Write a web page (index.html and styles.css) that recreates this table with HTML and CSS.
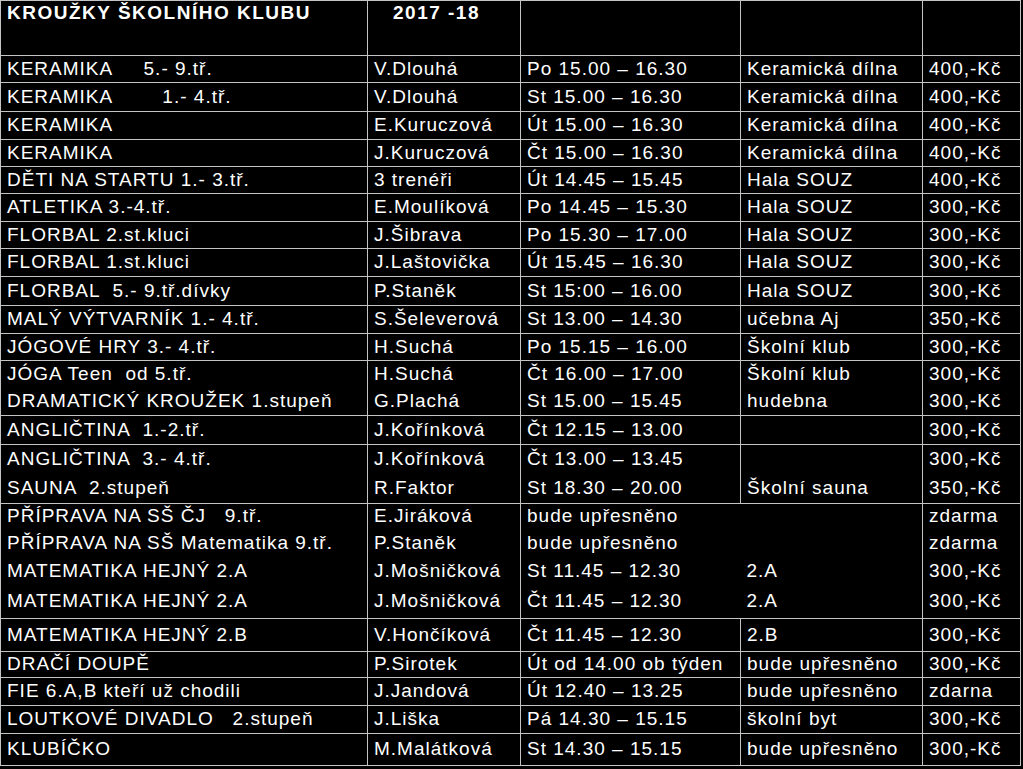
FILE: index.html
```html
<!DOCTYPE html>
<html lang="cs">
<head>
<meta charset="utf-8">
<title>Kroužky školního klubu 2017-18</title>
<link rel="stylesheet" href="styles.css">
</head>
<body>
<table class="sheet">
<colgroup>
<col class="c1"><col class="c2"><col class="c3"><col class="c4"><col class="c5">
</colgroup>
<tbody>
<tr class="head h55"><td class="title">KROUŽKY ŠKOLNÍHO KLUBU</td><td class="title year">2017 -18</td><td></td><td></td><td></td></tr>
<tr class="h27"><td>KERAMIKA     5.- 9.tř.</td><td>V.Dlouhá</td><td>Po 15.00 – 16.30</td><td>Keramická dílna</td><td>400,-Kč</td></tr>
<tr class="h29"><td>KERAMIKA        1.- 4.tř.</td><td>V.Dlouhá</td><td>St 15.00 – 16.30</td><td>Keramická dílna</td><td>400,-Kč</td></tr>
<tr class="h28"><td>KERAMIKA</td><td>E.Kuruczová</td><td>Út 15.00 – 16.30</td><td>Keramická dílna</td><td>400,-Kč</td></tr>
<tr class="h27"><td>KERAMIKA</td><td>J.Kuruczová</td><td>Čt 15.00 – 16.30</td><td>Keramická dílna</td><td>400,-Kč</td></tr>
<tr class="h27"><td>DĚTI NA STARTU 1.- 3.tř.</td><td>3 trenéři</td><td>Út 14.45 – 15.45</td><td>Hala SOUZ</td><td>400,-Kč</td></tr>
<tr class="h28"><td>ATLETIKA 3.-4.tř.</td><td>E.Moulíková</td><td>Po 14.45 – 15.30</td><td>Hala SOUZ</td><td>300,-Kč</td></tr>
<tr class="h27"><td>FLORBAL 2.st.kluci</td><td>J.Šibrava</td><td>Po 15.30 – 17.00</td><td>Hala SOUZ</td><td>300,-Kč</td></tr>
<tr class="h28"><td>FLORBAL 1.st.kluci</td><td>J.Laštovička</td><td>Út 15.45 – 16.30</td><td>Hala SOUZ</td><td>300,-Kč</td></tr>
<tr class="h29"><td>FLORBAL  5.- 9.tř.dívky</td><td>P.Staněk</td><td>St 15:00 – 16.00</td><td>Hala SOUZ</td><td>300,-Kč</td></tr>
<tr class="h28"><td>MALÝ VÝTVARNÍK 1.- 4.tř.</td><td>S.Šeleverová</td><td>St 13.00 – 14.30</td><td>učebna Aj</td><td>350,-Kč</td></tr>
<tr class="h27"><td>JÓGOVÉ HRY 3.- 4.tř.</td><td>H.Suchá</td><td>Po 15.15 – 16.00</td><td>Školní klub</td><td>300,-Kč</td></tr>
<tr class="h28"><td>JÓGA Teen  od 5.tř.</td><td>H.Suchá</td><td>Čt 16.00 – 17.00</td><td>Školní klub</td><td>300,-Kč</td></tr>
<tr class="h27 cont"><td>DRAMATICKÝ KROUŽEK 1.stupeň</td><td>G.Plachá</td><td>St 15.00 – 15.45</td><td>hudebna</td><td>300,-Kč</td></tr>
<tr class="h29"><td>ANGLIČTINA  1.-2.tř.</td><td>J.Kořínková</td><td>Čt 12.15 – 13.00</td><td></td><td>300,-Kč</td></tr>
<tr class="h30"><td>ANGLIČTINA  3.- 4.tř.</td><td>J.Kořínková</td><td>Čt 13.00 – 13.45</td><td></td><td>300,-Kč</td></tr>
<tr class="h29 cont"><td>SAUNA  2.stupeň</td><td>R.Faktor</td><td>St 18.30 – 20.00</td><td>Školní sauna</td><td>350,-Kč</td></tr>
<tr class="h26 open"><td>PŘÍPRAVA NA SŠ ČJ   9.tř.</td><td>E.Jiráková</td><td class="join">bude upřesněno</td><td></td><td>zdarma</td></tr>
<tr class="h28 cont open"><td>PŘÍPRAVA NA SŠ Matematika 9.tř.</td><td>P.Staněk</td><td class="join">bude upřesněno</td><td></td><td>zdarma</td></tr>
<tr class="h28 cont open"><td>MATEMATIKA HEJNÝ 2.A</td><td>J.Mošničková</td><td class="join">St 11.45 – 12.30</td><td>2.A</td><td>300,-Kč</td></tr>
<tr class="h33 cont open"><td>MATEMATIKA HEJNÝ 2.A</td><td>J.Mošničková</td><td class="join">Čt 11.45 – 12.30</td><td>2.A</td><td>300,-Kč</td></tr>
<tr class="h33"><td>MATEMATIKA HEJNÝ 2.B</td><td>V.Hončíková</td><td>Čt 11.45 – 12.30</td><td>2.B</td><td>300,-Kč</td></tr>
<tr class="h26"><td>DRAČÍ DOUPĚ</td><td>P.Sirotek</td><td>Út od 14.00 ob týden</td><td>bude upřesněno</td><td>300,-Kč</td></tr>
<tr class="h28"><td>FIE 6.A,B kteří už chodili</td><td>J.Jandová</td><td>Út 12.40 – 13.25</td><td>bude upřesněno</td><td>zdarna</td></tr>
<tr class="h28"><td>LOUTKOVÉ DIVADLO   2.stupeň</td><td>J.Liška</td><td>Pá 14.30 – 15.15</td><td>školní byt</td><td>300,-Kč</td></tr>
<tr class="h32"><td>KLUBÍČKO</td><td>M.Malátková</td><td>St 14.30 – 15.15</td><td>bude upřesněno</td><td>300,-Kč</td></tr>
</tbody>
</table>
</body>
</html>
```
FILE: styles.css
```css
html, body {
  margin: 0;
  padding: 0;
  background: #000;
}

.sheet {
  border-collapse: collapse;
  table-layout: fixed;
  width: 1021px;
  color: #fff;
  font-family: "Liberation Sans", Arial, sans-serif;
  font-size: 19px;
  letter-spacing: 1px;
}

.c1 { width: 367px; }
.c2 { width: 153px; }
.c3 { width: 220px; }
.c4 { width: 182px; }
.c5 { width: 98px; }

.sheet td {
  border: 1px solid #c4c4c4;
  padding: 0 0 1px 6px;
  white-space: pre;
  vertical-align: middle;
  line-height: 22px;
  overflow: hidden;
}

.sheet tr.cont td {
  border-top: hidden;
}

.sheet tr.open td.join {
  border-right: hidden;
}

.head td {
  vertical-align: top;
  padding-top: 1px;
}

.title {
  font-weight: bold;
  letter-spacing: 1.5px;
}

.sheet td.year {
  padding-left: 25px;
}

.h26 { height: 26px; }
.h27 { height: 27px; }
.h28 { height: 28px; }
.h29 { height: 29px; }
.h30 { height: 30px; }
.h32 { height: 32px; }
.h33 { height: 33px; }
.h55 { height: 55px; }
```
